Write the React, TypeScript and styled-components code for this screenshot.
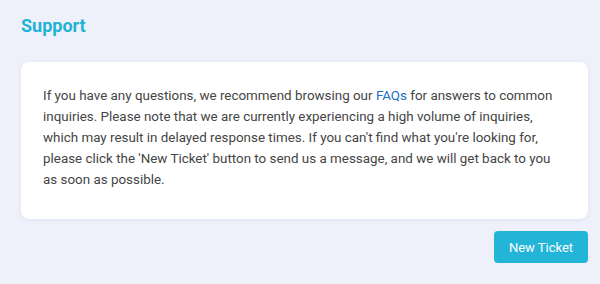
import React from 'react';
import styled, { createGlobalStyle } from 'styled-components';

const GlobalStyle = createGlobalStyle`
  html, body {
    margin: 0;
    padding: 0;
    background: #eef0fa;
    font-family: Roboto, "Liberation Sans", sans-serif;
  }
`;

const Page = styled.div`
  display: flex;
  flex-direction: column;
  padding: 15px 12px 20px 21px;
  min-height: 284px;
  box-sizing: border-box;
`;

const Title = styled.h1`
  margin: 0 0 25px;
  font-size: 18px;
  line-height: 22px;
  font-weight: 700;
  color: #21b3d6;
`;

const Card = styled.div`
  background: #ffffff;
  border-radius: 8px;
  box-shadow: 0 1px 4px rgba(60, 70, 120, 0.08);
  padding: 23px 22px 29px;
`;

const Text = styled.p`
  margin: 0;
  font-size: 13.4px;
  line-height: 21px;
  color: #454545;
`;

const Link = styled.a`
  color: #1a6fc4;
  text-decoration: none;
`;

const Actions = styled.div`
  display: flex;
  justify-content: flex-end;
  margin-top: 12px;
`;

const Button = styled.button`
  height: 32px;
  width: 94px;
  border: none;
  border-radius: 4px;
  background: #22b5d8;
  color: #ffffff;
  font-family: inherit;
  font-size: 13px;
  cursor: pointer;
`;

const App: React.FC = () => {
  return (
    <>
      <GlobalStyle />
      <Page>
        <Title>Support</Title>
        <Card>
          <Text>
            If you have any questions, we recommend browsing our <Link href="#">FAQs</Link> for answers to common
            inquiries. Please note that we are currently experiencing a high volume of inquiries,
            which may result in delayed response times. If you can't find what you're looking for,
            please click the 'New Ticket' button to send us a message, and we will get back to you
            as soon as possible.
          </Text>
        </Card>
        <Actions>
          <Button>New Ticket</Button>
        </Actions>
      </Page>
    </>
  );
};

export default App;
